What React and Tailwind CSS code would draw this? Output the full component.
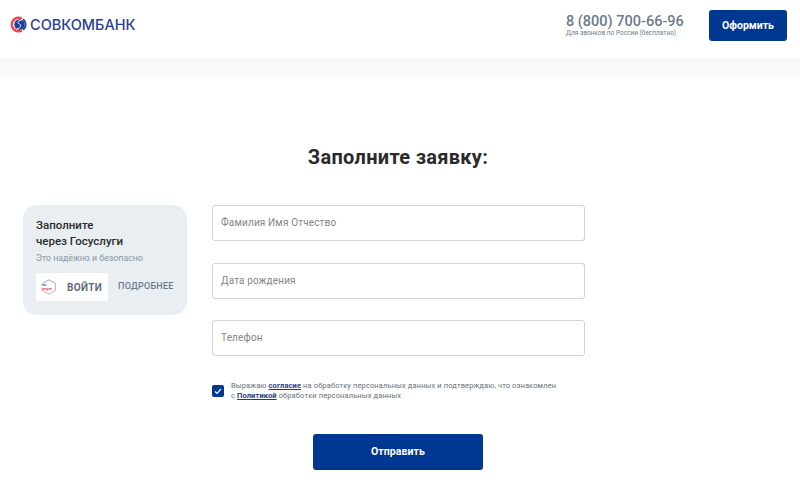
import React from "react";

function LogoMark() {
  return (
    <svg width="17" height="17" viewBox="0 0 34 34" fill="none">
      <path d="M25 3 A16 16 0 1 0 25 31 L22 26 A10.5 10.5 0 1 1 22 8 Z" fill="#f0454a" />
      <circle cx="19" cy="17" r="10.5" fill="#20409a" />
      <path d="M24 8 C15 9 13 14 19 16 C24 18 21 25 13 26" stroke="white" strokeWidth="1.8" fill="none" />
      <path d="M27 5 A15 15 0 0 1 27 29 L25 26 A11 11 0 0 0 25 8 Z" fill="#20409a" />
    </svg>
  );
}

function GosuslugiMark() {
  return (
    <svg width="18" height="18" viewBox="0 0 18 18" fill="none">
      <path d="M2.5 5.5 L9 1.8 L15.5 5.5" stroke="#6f93cc" strokeWidth="0.8" />
      <path d="M15.5 5.5 V12.5 L9 16.2 L2.5 12.5" stroke="#ee8a90" strokeWidth="0.8" />
      <text x="1.5" y="7.8" fontSize="3.3" fontWeight="700" fill="#3b6cb7">гос</text>
      <text x="1.5" y="11.8" fontSize="3.3" fontWeight="700" fill="#e5424d">услуги</text>
    </svg>
  );
}

function Field({ placeholder }) {
  return (
    <div className="h-[36px] rounded-[3px] border border-[#d4d4d4] bg-white px-2 pb-[1px] flex items-center text-[10px] text-[#858585] tracking-[0.15px]">
      {placeholder}
    </div>
  );
}

export default function App() {
  return (
    <div className="min-h-[497px] bg-white font-['Roboto',sans-serif] overflow-hidden">
      {/* Шапка */}
      <header className="h-[58px] flex items-center justify-between pl-[10px] pr-[13px]">
        <div className="flex items-center gap-[3px] -mt-[9px]">
          <LogoMark />
          <span className="font-['Inter',sans-serif] text-[14.5px] font-medium text-[#2a3f8f]">СОВКОМБАНК</span>
        </div>
        <div className="flex items-center gap-[25px] -mt-[7px]">
          <div className="flex flex-col pt-[1px] w-[118px]">
            <span className="text-[14.5px] leading-[14px] font-medium text-[#6b7a8a] whitespace-nowrap">8 (800) 700-66-96</span>
            <span className="text-[6.5px] leading-[8px] text-[#6b7a8a] whitespace-nowrap">Для звонков по России (бесплатно)</span>
          </div>
          <button className="w-[78px] h-[31px] rounded-[3px] bg-[#003791] text-white text-[10.5px] font-bold">Оформить</button>
        </div>
      </header>
      <div className="h-[17px] bg-[#f8f9fb]" />

      {/* Заявка */}
      <h1 className="mt-[70px] text-center text-[20px] leading-[24px] font-bold text-[#2b2b2b] -translate-x-[2px] tracking-[0.3px]">Заполните заявку:</h1>

      <div className="mt-[36px] flex items-start pl-[23px]">
        <div className="w-[164px] h-[110px] rounded-[14px] bg-[#e9eef2] pt-[12px] pl-[13px]">
          <div className="text-[11.5px] leading-[16px] font-medium text-[#2b2b2b]">Заполните<br />через Госуслуги</div>
          <div className="mt-[3px] text-[8.8px] leading-[12px] text-[#8a97a3]">Это надёжно и безопасно</div>
          <div className="mt-[9px] flex items-center">
            <div className="w-[72px] h-[28px] rounded-[3px] bg-white flex items-center pl-[4px] gap-[9px]">
              <GosuslugiMark />
              <span className="text-[10px] font-bold text-[#5f6b7a] tracking-[0.3px]">ВОЙТИ</span>
            </div>
            <span className="ml-[10px] text-[9px] font-medium text-[#6b7a8a] tracking-[0.25px]">ПОДРОБНЕЕ</span>
          </div>
        </div>

        <div className="ml-[25px] w-[373px]">
          <div className="flex flex-col gap-[21.5px]">
            <Field placeholder="Фамилия Имя Отчество" />
            <Field placeholder="Дата рождения" />
            <Field placeholder="Телефон" />
          </div>

          <div className="mt-[25px] flex items-center">
            <div className="w-[12px] h-[12px] rounded-[2px] bg-[#003791] flex items-center justify-center">
              <svg width="8" height="7" viewBox="0 0 8 7" fill="none">
                <path d="M1 3.5 L3 5.5 L7 1" stroke="white" strokeWidth="1.2" />
              </svg>
            </div>
            <p className="ml-[7px] text-[7.5px] leading-[10px] text-[#666f78] tracking-[0.12px] whitespace-nowrap">
              Выражаю <a className="font-bold underline text-[#1f3d80]">согласие</a> на обработку персональных данных и подтверждаю, что ознакомлен<br />
              с <a className="font-bold underline text-[#1f3d80]">Политикой</a> обработки персональных данных
            </p>
          </div>

          <div className="mt-[33px] pl-[101px]">
            <button className="w-[170px] h-[36px] rounded-[3px] bg-[#003791] text-white text-[10.5px] font-bold tracking-[0.1px]">Отправить</button>
          </div>
        </div>
      </div>
    </div>
  );
}
